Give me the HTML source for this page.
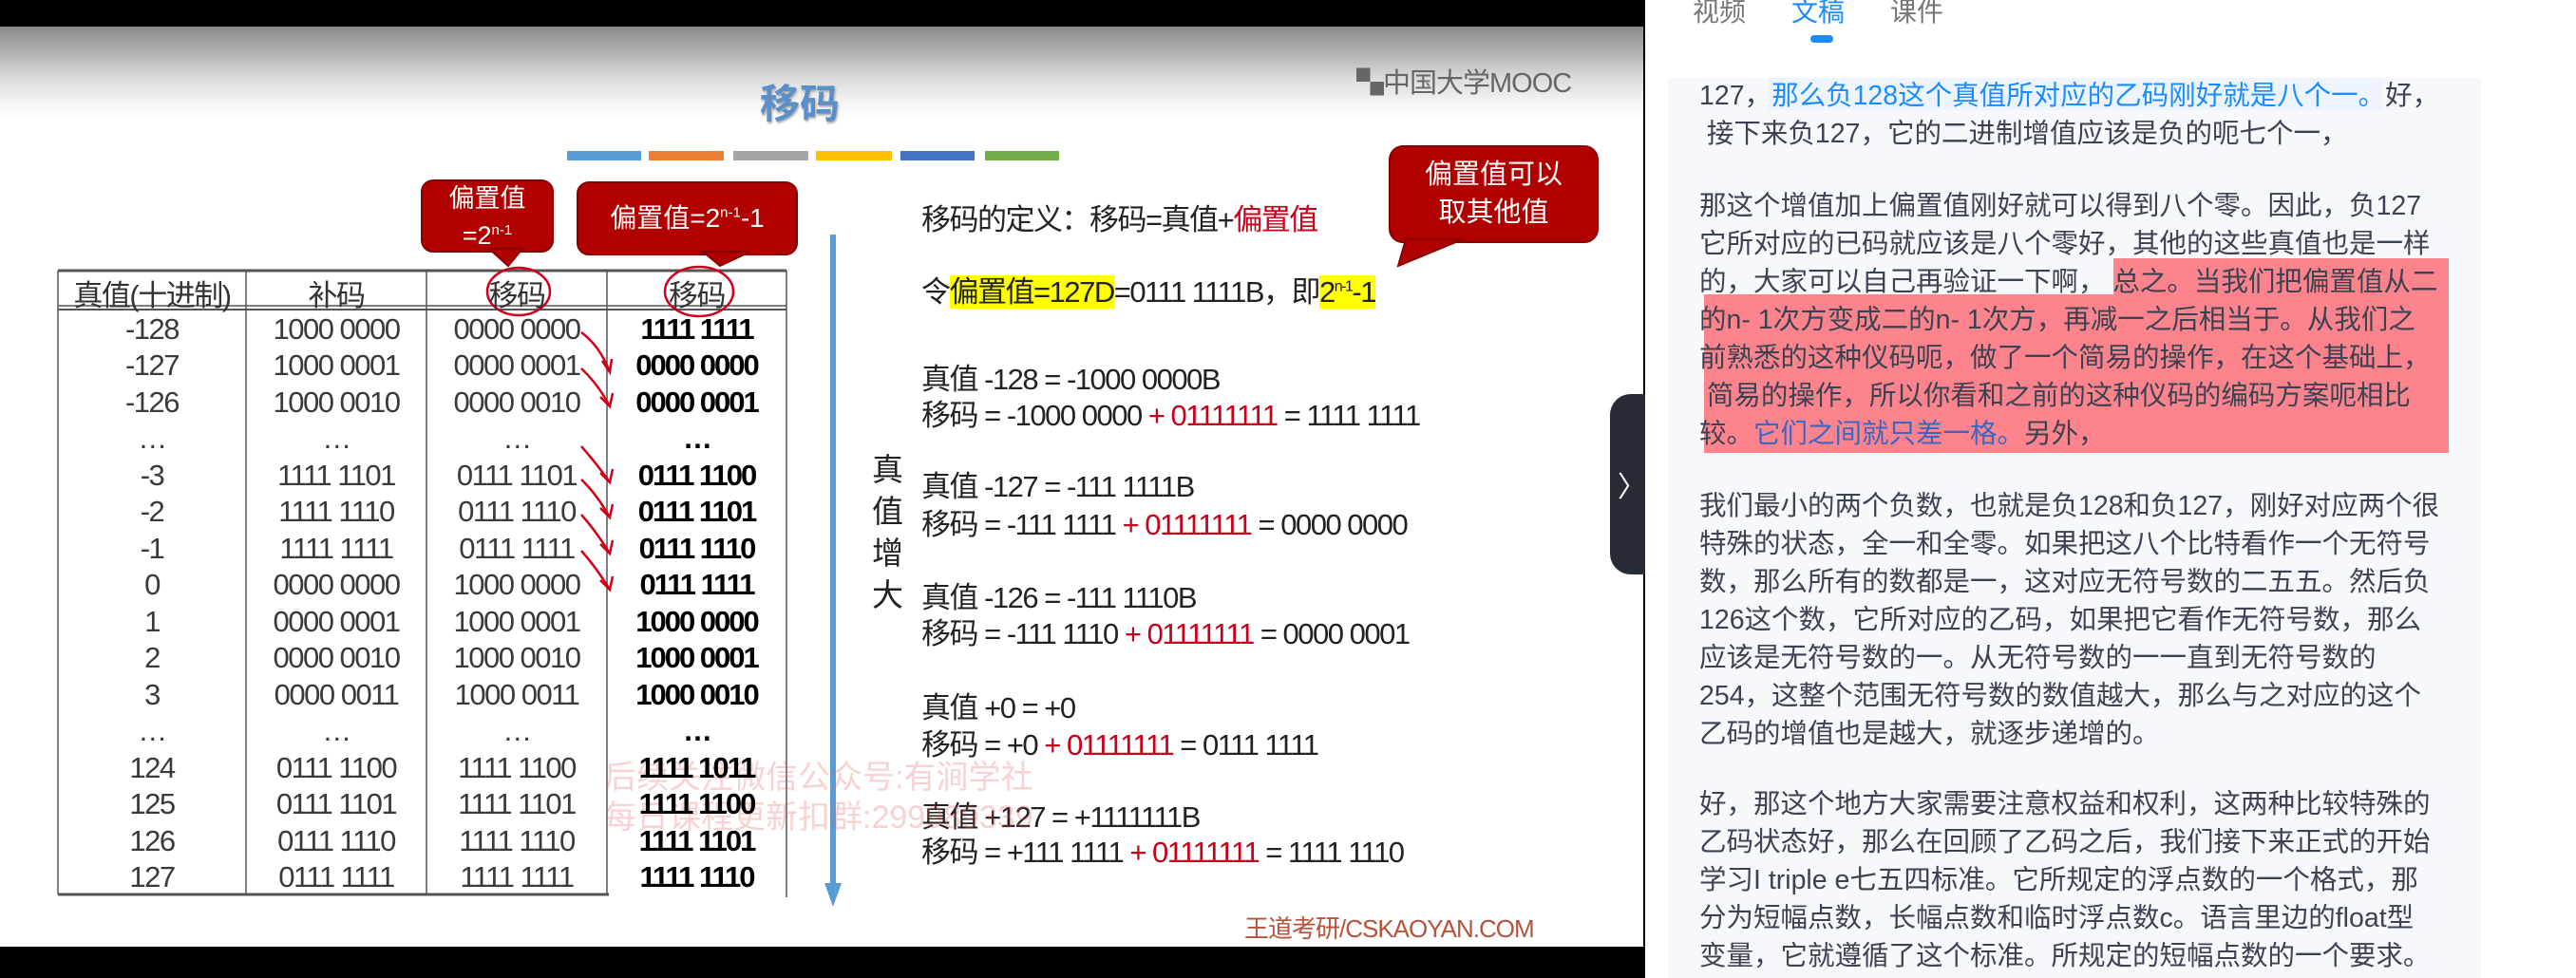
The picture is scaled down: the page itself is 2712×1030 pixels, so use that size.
<!DOCTYPE html>
<html><head><meta charset="utf-8"><style>
*{margin:0;padding:0;box-sizing:border-box}
body{width:2712px;height:1030px;background:#000;position:relative;overflow:hidden;font-family:"Liberation Sans","Noto Sans CJK SC",sans-serif}
.a{position:absolute;white-space:nowrap}
#slide{position:absolute;left:0;top:28px;width:1730px;height:969px;background:linear-gradient(#8a8a8a 0px,#b5b5b5 30px,#dcdcdc 55px,#f4f4f4 80px,#fff 100px,#fff 100%);overflow:hidden}
.st{font-size:31px;color:#222;letter-spacing:-1.5px}
.c{position:absolute;text-align:center;font-size:31px;color:#3a3a3a;letter-spacing:-1.5px;white-space:nowrap}
.b{color:#000;font-weight:bold;letter-spacing:-2px}
.r{color:#c8001a}
#panel{position:absolute;left:1732px;top:0;width:980px;height:1030px;background:#fff}
.p{position:absolute;left:57px;font-size:28.5px;color:#3b4252;white-space:nowrap;font-family:"Liberation Sans","Noto Sans CJK SC",sans-serif}
</style></head><body>
<div id="slide">
<div class="a" style="left:800px;top:48px;font-size:42px;color:#5a8fc8;font-weight:bold;text-shadow:1px 2px 2px #aaa">移码</div>
<div class="a" style="left:1428px;top:36px;font-size:29px;color:#666;letter-spacing:-1px">▚中国大学MOOC</div>
<div class="a" style="left:597px;top:131px;width:78px;height:10px;background:#5b9bd5"></div>
<div class="a" style="left:683px;top:131px;width:79px;height:10px;background:#ed7d31"></div>
<div class="a" style="left:772px;top:131px;width:79px;height:10px;background:#a5a5a5"></div>
<div class="a" style="left:859px;top:131px;width:80px;height:10px;background:#ffc000"></div>
<div class="a" style="left:948px;top:131px;width:78px;height:10px;background:#4472c4"></div>
<div class="a" style="left:1037px;top:131px;width:78px;height:10px;background:#70ad47"></div>
<svg class="a" style="left:0;top:0" width="1730" height="969" viewBox="0 28 1730 969">
<g fill="#b10000" stroke="#8a0000" stroke-width="2">
<rect x="444" y="190" width="138" height="75" rx="12"/><polygon points="515,262 550,262 535,280"/>
<rect x="608" y="192" width="231" height="76" rx="12"/><polygon points="740,265 790,265 758,280"/>
<rect x="1463" y="154" width="219" height="101" rx="14"/><polygon points="1480,252 1540,252 1472,280"/>
</g>
<g fill="none" stroke="#555" stroke-width="1.5">
<line x1="61" y1="285" x2="828" y2="285" stroke-width="3"/>
<line x1="61" y1="322" x2="828" y2="322"/><line x1="61" y1="326" x2="828" y2="326" stroke-width="2"/>
<line x1="61" y1="285" x2="61" y2="942"/><line x1="259" y1="285" x2="259" y2="942"/>
<line x1="449" y1="285" x2="449" y2="942"/><line x1="639" y1="285" x2="639" y2="942"/>
<line x1="828" y1="285" x2="828" y2="945"/>
<line x1="61" y1="942" x2="641" y2="942" stroke-width="3"/>
</g>
<g fill="none" stroke="#d0001a" stroke-width="2.5">
<ellipse cx="546" cy="307" rx="33" ry="25"/><ellipse cx="736" cy="307" rx="36" ry="26"/>
<path d="M612 350 Q632 365 642 392 M634 380 L642 392 L644 378"/>
<path d="M612 388 Q630 405 642 428 M632 418 L642 428 L645 414"/>
<path d="M612 505 Q628 520 642 545 M632 535 L642 545 L645 531"/>
<path d="M612 542 Q628 560 642 583 M632 573 L642 583 L645 569"/>
<path d="M612 580 Q628 598 642 621 M632 611 L642 621 L645 607"/>
<path d="M612 470 Q628 488 642 508 M632 498 L642 508 L645 494"/>
</g>
<line x1="877" y1="247" x2="877" y2="935" stroke="#5b9bd5" stroke-width="6"/>
<polygon points="868,930 886,930 877,955" fill="#5b9bd5"/>
</svg>
<div class="a" style="left:444px;top:164px;width:138px;text-align:center;color:#fff;font-size:27px;line-height:34px">偏置值<br>=2<sup style="font-size:15px">n-1</sup></div>
<div class="a" style="left:608px;top:180px;width:231px;text-align:center;color:#fff;font-size:28px">偏置值=2<sup style="font-size:15px">n-1</sup>-1</div>
<div class="a" style="left:1463px;top:136px;width:219px;text-align:center;color:#fff;font-size:29px;line-height:40px">偏置值可以<br>取其他值</div>
<div class="c" style="left:61px;width:198px;top:258px;color:#333">真值(十进制)</div>
<div class="c" style="left:259px;width:190px;top:258px;color:#333">补码</div>
<div class="c" style="left:449px;width:190px;top:258px;color:#333">移码</div>
<div class="c" style="left:639px;width:189px;top:258px;color:#333">移码</div>
<div class="a" style="left:918px;top:445px;font-size:33px;line-height:44px;color:#222;white-space:normal;width:36px">真值增大</div>
<div class="a st" style="left:970px;top:178px">移码的定义：移码=真值+<span class="r">偏置值</span></div>
<div class="a st" style="left:970px;top:254px">令<span style="background:#ff0">偏置值=127D</span>=0111 1111B，即<span style="background:#ff0">2<sup style="font-size:16px">n-1</sup>-1</span></div>
<div class="a st" style="left:970px;top:346px">真值 -128 = -1000 0000B</div>
<div class="a st" style="left:970px;top:384px">移码 = -1000 0000 <span class="r">+ 01111111</span> = 1111 1111</div>
<div class="a st" style="left:970px;top:459px">真值 -127 = -111 1111B</div>
<div class="a st" style="left:970px;top:499px">移码 = -111 1111 <span class="r">+ 01111111</span> = 0000 0000</div>
<div class="a st" style="left:970px;top:576px">真值 -126 = -111 1110B</div>
<div class="a st" style="left:970px;top:614px">移码 = -111 1110 <span class="r">+ 01111111</span> = 0000 0001</div>
<div class="a st" style="left:970px;top:692px">真值 +0 = +0</div>
<div class="a st" style="left:970px;top:731px">移码 = +0 <span class="r">+ 01111111</span> = 0111 1111</div>
<div class="a st" style="left:970px;top:807px">真值 +127 = +1111111B</div>
<div class="a st" style="left:970px;top:844px">移码 = +111 1111 <span class="r">+ 01111111</span> = 1111 1110</div>
<div class="a" style="left:636px;top:770px;font-size:34px;line-height:42px;color:rgba(230,90,90,.28)">后续关注微信公众号:有涧学社<br>每日课程更新扣群:299989339</div>
<div class="a" style="left:1310px;top:930px;font-size:26px;color:#b5533c;letter-spacing:-1px">王道考研/CSKAOYAN.COM</div>
<div id="rows"></div>
</div>
<script>
var d=[["-128","1000 0000","0000 0000","1111 1111"],["-127","1000 0001","0000 0001","0000 0000"],["-126","1000 0010","0000 0010","0000 0001"],["…","…","…","…"],["-3","1111 1101","0111 1101","0111 1100"],["-2","1111 1110","0111 1110","0111 1101"],["-1","1111 1111","0111 1111","0111 1110"],["0","0000 0000","1000 0000","0111 1111"],["1","0000 0001","1000 0001","1000 0000"],["2","0000 0010","1000 0010","1000 0001"],["3","0000 0011","1000 0011","1000 0010"],["…","…","…","…"],["124","0111 1100","1111 1100","1111 1011"],["125","0111 1101","1111 1101","1111 1100"],["126","0111 1110","1111 1110","1111 1101"],["127","0111 1111","1111 1111","1111 1110"]];
var L=[61,259,449,639],W=[198,190,190,189],h="";
for(var i=0;i<16;i++){var y=347+i*38.47-28-18;for(var j=0;j<4;j++){h+='<div class="c'+(j==3?' b':'')+'" style="left:'+L[j]+'px;width:'+W[j]+'px;top:'+y+'px">'+d[i][j]+'</div>';}}
document.getElementById('rows').innerHTML=h;
</script>
<div class="a" style="left:1695px;top:415px;width:40px;height:190px;background:#262b35;border-radius:22px 0 0 22px"></div>
<div class="a" style="left:1703px;top:488px;color:#fff;font-size:30px">〉</div>
<div id="panel">
<div class="a" style="left:50px;top:-9px;font-size:28px;color:#777">视频</div>
<div class="a" style="left:154px;top:-9px;font-size:28px;color:#1a8cff">文稿</div>
<div class="a" style="left:258px;top:-9px;font-size:28px;color:#777">课件</div>
<div class="a" style="left:174px;top:37px;width:24px;height:8px;border-radius:4px;background:#1a8cff"></div>
<div class="a" style="left:24px;top:82px;width:856px;height:948px;background:#f6f8fc"></div>
<div class="a" style="left:130px;top:82px;width:646px;height:34px;background:#edf4fd"></div>
<div class="a" style="left:493px;top:272px;width:353px;height:38px;background:#fd848c"></div>
<div class="a" style="left:62px;top:310px;width:784px;height:167px;background:#fd848c"></div>
<div class="p" style="top:78px">127，<span style="color:#1a8cff">那么负128这个真值所对应的乙码刚好就是八个一。</span>好，</div>
<div class="p" style="top:118px">&nbsp;接下来负127，它的二进制增值应该是负的呃七个一，</div>
<div class="p" style="top:194px">那这个增值加上偏置值刚好就可以得到八个零。因此，负127</div>
<div class="p" style="top:234px">它所对应的已码就应该是八个零好，其他的这些真值也是一样</div>
<div class="p" style="top:274px">的，大家可以自己再验证一下啊，&nbsp;总之。当我们把偏置值从二</div>
<div class="p" style="top:314px">的n- 1次方变成二的n- 1次方，再减一之后相当于。从我们之</div>
<div class="p" style="top:354px">前熟悉的这种仪码呃，做了一个简易的操作，在这个基础上，</div>
<div class="p" style="top:394px">&nbsp;简易的操作，所以你看和之前的这种仪码的编码方案呃相比</div>
<div class="p" style="top:434px">较。<span style="color:#3a66c4">它们之间就只差一格。</span>另外，</div>
<div class="p" style="top:510px">我们最小的两个负数，也就是负128和负127，刚好对应两个很</div>
<div class="p" style="top:550px">特殊的状态，全一和全零。如果把这八个比特看作一个无符号</div>
<div class="p" style="top:590px">数，那么所有的数都是一，这对应无符号数的二五五。然后负</div>
<div class="p" style="top:630px">126这个数，它所对应的乙码，如果把它看作无符号数，那么</div>
<div class="p" style="top:670px">应该是无符号数的一。从无符号数的一一直到无符号数的</div>
<div class="p" style="top:710px">254，这整个范围无符号数的数值越大，那么与之对应的这个</div>
<div class="p" style="top:750px">乙码的增值也是越大，就逐步递增的。</div>
<div class="p" style="top:824px">好，那这个地方大家需要注意权益和权利，这两种比较特殊的</div>
<div class="p" style="top:864px">乙码状态好，那么在回顾了乙码之后，我们接下来正式的开始</div>
<div class="p" style="top:904px">学习I triple e七五四标准。它所规定的浮点数的一个格式，那</div>
<div class="p" style="top:944px">分为短幅点数，长幅点数和临时浮点数c。语言里边的float型</div>
<div class="p" style="top:984px">变量，它就遵循了这个标准。所规定的短幅点数的一个要求。</div>
</div>
</body></html>
